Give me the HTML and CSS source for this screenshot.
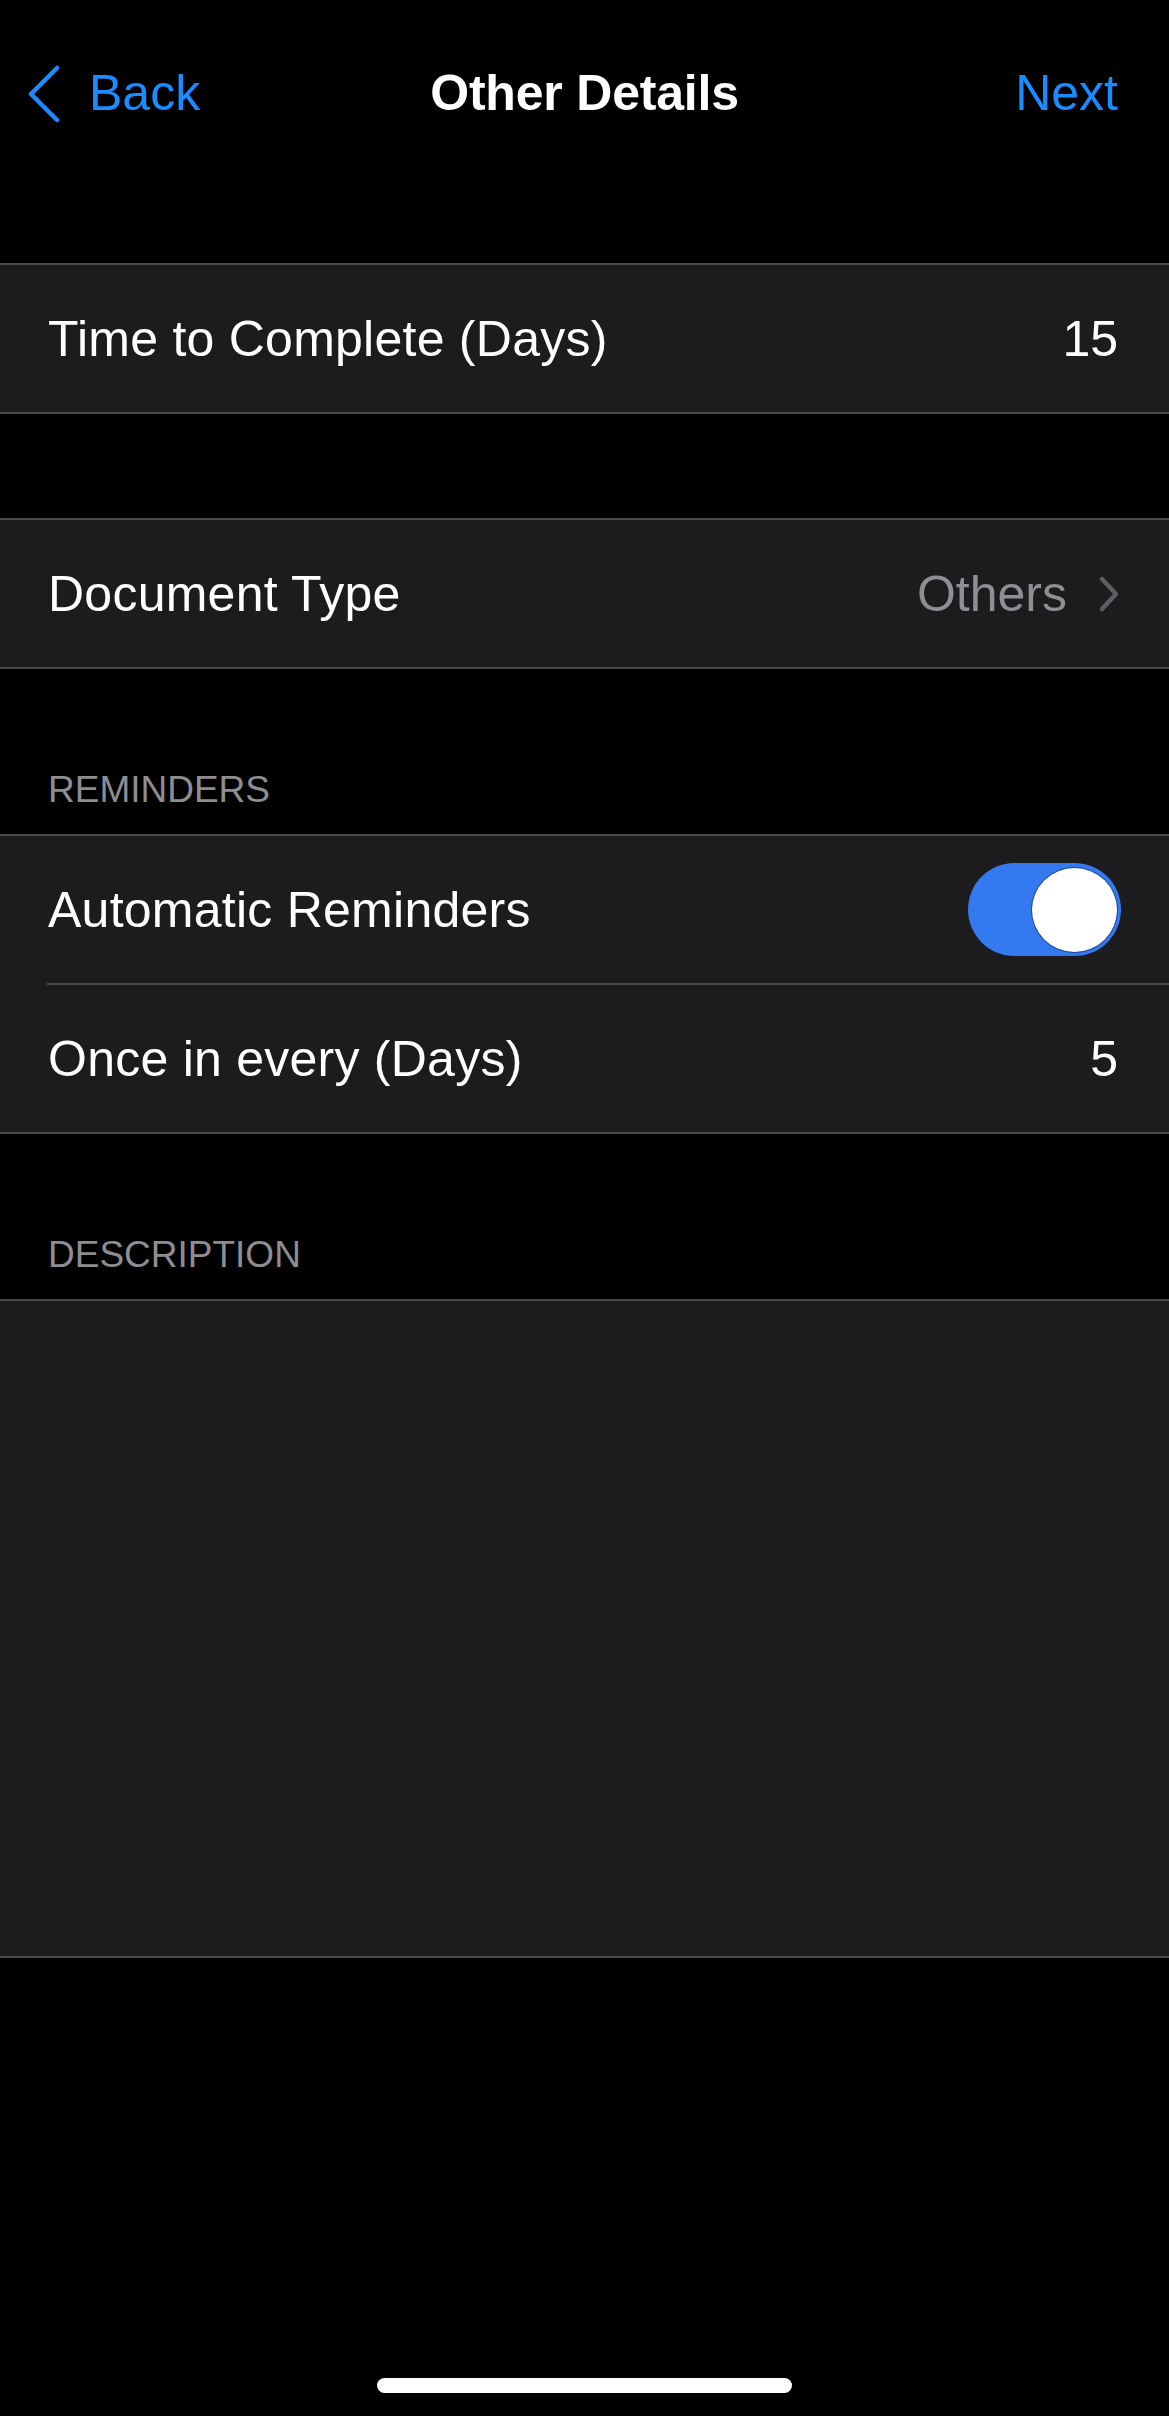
FILE: index.html
```html
<!DOCTYPE html>
<html lang="en">
<head>
<meta charset="utf-8">
<title>Other Details</title>
<link rel="stylesheet" href="styles.css">
</head>
<body>
<div class="screen">
  <header class="nav">
    <div class="nav-left">
      <svg class="back-chevron" width="36" height="58" viewBox="0 0 36 58" aria-hidden="true">
        <path d="M31 3 L5 29 L31 55" fill="none" stroke="#1a8cff" stroke-width="4.5" stroke-linecap="round" stroke-linejoin="round"/>
      </svg>
      <span class="nav-link">Back</span>
    </div>
    <div class="nav-title">Other Details</div>
    <div class="nav-right"><span class="nav-link">Next</span></div>
  </header>

  <section class="group">
    <div class="row">
      <span class="label">Time to Complete (Days)</span>
      <span class="value">15</span>
    </div>
  </section>

  <div class="gap"></div>

  <section class="group">
    <div class="row">
      <span class="label">Document Type</span>
      <span class="value muted">Others
        <svg class="disclosure" width="22" height="38" viewBox="0 0 22 38" aria-hidden="true">
          <path d="M4 4 L18 19 L4 34" fill="none" stroke="#5d5d62" stroke-width="4.5" stroke-linecap="round" stroke-linejoin="round"/>
        </svg>
      </span>
    </div>
  </section>

  <div class="section-header">REMINDERS</div>

  <section class="group">
    <div class="row">
      <span class="label">Automatic Reminders</span>
      <span class="toggle"><span class="knob"></span></span>
    </div>
    <div class="separator"></div>
    <div class="row">
      <span class="label">Once in every (Days)</span>
      <span class="value">5</span>
    </div>
  </section>

  <div class="section-header">DESCRIPTION</div>

  <section class="group description"></section>

  <div class="home-indicator"></div>
</div>
</body>
</html>
```

FILE: styles.css
```css
* { box-sizing: border-box; }

html, body {
  margin: 0;
  padding: 0;
  background: #000;
}

body {
  font-family: "Liberation Sans", Arial, sans-serif;
  color: #fff;
}

.screen {
  width: 1169px;
  min-height: 2416px;
  display: flex;
  flex-direction: column;
}

.nav {
  height: 263px;
  padding: 63px 26px 0 26px;
  display: grid;
  grid-template-columns: 1fr auto 1fr;
  align-items: start;
  font-size: 50px;
  line-height: 60px;
}

.nav-left {
  display: flex;
  align-items: center;
  gap: 27px;
  height: 60px;
}

.back-chevron {
  display: block;
  margin-top: 2px;
}

.nav-link {
  color: #1a8cff;
}

.nav-title {
  font-weight: 700;
  letter-spacing: -0.2px;
}

.nav-right {
  text-align: right;
  padding-right: 25px;
}

.group {
  background: #1c1c1e;
  border-top: 2px solid #4c4c50;
  border-bottom: 2px solid #4c4c50;
}

.row {
  height: 147px;
  padding: 0 51px 0 48px;
  display: flex;
  align-items: center;
  justify-content: space-between;
  font-size: 50px;
}

.label {
  letter-spacing: 0.25px;
}

.value {
  display: flex;
  align-items: center;
  gap: 31px;
}

.value.muted {
  color: #8e8e93;
}

.disclosure {
  display: block;
  margin-right: -2px;
}

.separator {
  height: 2px;
  margin-left: 47px;
  background: #4c4c50;
}

.gap {
  height: 104px;
}

.section-header {
  height: 165px;
  padding: 0 48px 22px;
  display: flex;
  align-items: flex-end;
  font-size: 37px;
  line-height: 44px;
  color: #8d8d92;
}

.toggle {
  width: 153px;
  height: 93px;
  margin-right: -3px;
  border-radius: 47px;
  background: #3579f0;
  display: flex;
  align-items: center;
  justify-content: flex-end;
  padding-right: 4px;
}

.knob {
  width: 85px;
  height: 84px;
  border-radius: 50%;
  background: #fff;
  box-shadow: 0 0 0 1px rgba(10, 40, 110, 0.6);
}

.description {
  height: 659px;
}

.home-indicator {
  width: 415px;
  height: 15px;
  border-radius: 8px;
  background: #fff;
  margin: auto auto 23px;
}
```
